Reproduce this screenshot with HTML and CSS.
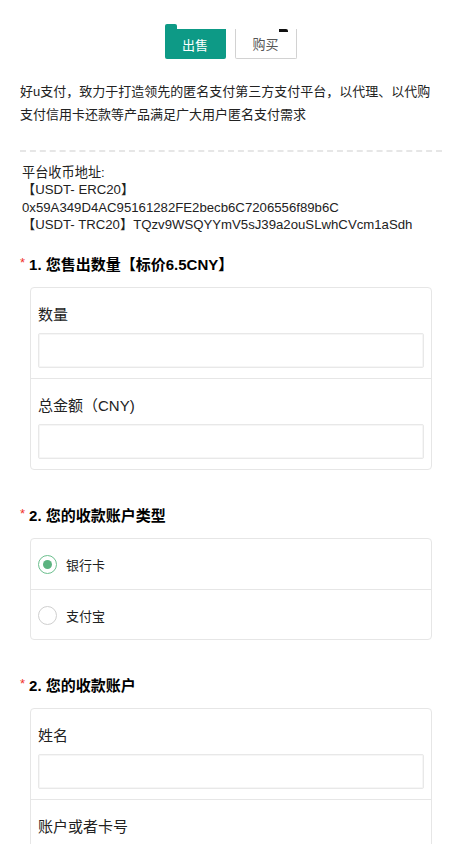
FILE: index.html
```html
<!DOCTYPE html>
<html lang="zh-CN">
<head>
<meta charset="utf-8">
<title>好u支付</title>
<link rel="stylesheet" href="styles.css">
</head>
<body>
<div class="page">
  <div class="tabs">
    <div class="tab tab-sell"><span class="notch"></span>出售</div>
    <div class="tab tab-buy">购买<span class="mark"></span></div>
  </div>

  <p class="intro">好u支付，致力于打造领先的匿名支付第三方支付平台，以代理、以代购支付信用卡还款等产品满足广大用户匿名支付需求</p>

  <div class="divider"></div>

  <div class="address">
    <div>平台收币地址:</div>
    <div>【USDT- ERC20】</div>
    <div>0x59A349D4AC95161282FE2becb6C7206556f89b6C</div>
    <div>【USDT- TRC20】TQzv9WSQYYmV5sJ39a2ouSLwhCVcm1aSdh</div>
  </div>

  <section class="question q-first">
    <h2 class="q-title"><span class="req">*</span>1. 您售出数量【标价6.5CNY】</h2>
    <div class="card">
      <div class="field">
        <div class="label">数量</div>
        <div class="input"></div>
      </div>
      <div class="field">
        <div class="label">总金额（CNY)</div>
        <div class="input"></div>
      </div>
    </div>
  </section>

  <section class="question">
    <h2 class="q-title"><span class="req">*</span>2. 您的收款账户类型</h2>
    <div class="card">
      <div class="option">
        <span class="radio checked"></span>
        <span class="opt-label">银行卡</span>
      </div>
      <div class="option">
        <span class="radio"></span>
        <span class="opt-label">支付宝</span>
      </div>
    </div>
  </section>

  <section class="question">
    <h2 class="q-title"><span class="req">*</span>2. 您的收款账户</h2>
    <div class="card">
      <div class="field">
        <div class="label">姓名</div>
        <div class="input"></div>
      </div>
      <div class="field">
        <div class="label">账户或者卡号</div>
        <div class="input"></div>
      </div>
    </div>
  </section>
</div>
</body>
</html>
```

FILE: styles.css
```css
* {
  box-sizing: border-box;
}

html, body {
  margin: 0;
  padding: 0;
  background: #ffffff;
}

body {
  font-family: "Liberation Sans", "Noto Sans CJK SC", sans-serif;
  color: #222;
}

.page {
  padding: 0 20px;
}

.tabs {
  display: flex;
  justify-content: center;
  gap: 9px;
  padding-top: 29px;
  padding-right: 1px;
}

.tab {
  position: relative;
  height: 30px;
  display: flex;
  align-items: center;
  justify-content: center;
  font-size: 13px;
}

.tab-sell {
  width: 61px;
  background: #0d9a86;
  color: #fff;
  border-radius: 0 0 2px 2px;
}

.notch {
  position: absolute;
  left: 0;
  top: -5px;
  width: 12px;
  height: 6px;
  background: #0d9a86;
  border-radius: 2px 2px 0 0;
}

.tab-buy {
  width: 62px;
  background: #fff;
  color: #555;
  border: 1px solid #d2d2d2;
  border-top: none;
  border-radius: 0 0 2px 2px;
}

.mark {
  position: absolute;
  right: 8px;
  top: 0;
  width: 9px;
  height: 3px;
  background: #111;
  border-radius: 0 2px 0 0;
}

.intro {
  margin: 21px 0 0;
  font-size: 13px;
  line-height: 23px;
  color: #222;
}

.divider {
  margin-top: 24px;
  border-top: 2px dashed #e6e6e6;
}

.address {
  margin-top: 12px;
  padding-left: 2px;
  font-size: 13.2px;
  line-height: 17.4px;
  color: #222;
}

.question {
  margin-top: 36px;
}

.question.q-first {
  margin-top: 21px;
}

.q-title {
  margin: 0;
  font-size: 15px;
  line-height: 20px;
  font-weight: bold;
  color: #000;
}

.req {
  color: #f0302a;
  font-size: 13px;
  font-weight: normal;
  margin-right: 4px;
  position: relative;
  top: -3px;
}

.card {
  margin: 11px 10px 0 10px;
  border: 1px solid #e6e6e6;
  border-radius: 4px;
}

.field {
  padding: 17px 7px 10px;
  border-top: 1px solid #e6e6e6;
}

.field:first-child {
  border-top: none;
}

.label {
  font-size: 15px;
  line-height: 20px;
  color: #222;
}

.input {
  margin-top: 8px;
  height: 35px;
  border: 1px solid #e8e8e8;
  border-radius: 2px;
  box-shadow: inset 0 0 0 1px #f6f6f6;
}

.option {
  height: 50px;
  display: flex;
  align-items: center;
  padding: 2px 7px 0;
  border-top: 1px solid #e6e6e6;
}

.option:first-child {
  border-top: none;
}

.radio {
  width: 19px;
  height: 19px;
  border-radius: 50%;
  border: 1.5px solid #cfcfcf;
  display: flex;
  align-items: center;
  justify-content: center;
  flex-shrink: 0;
}

.radio.checked {
  border-color: #6cbf8e;
}

.radio.checked::after {
  content: "";
  width: 9px;
  height: 9px;
  border-radius: 50%;
  background: #5cb380;
}

.opt-label {
  margin-left: 9px;
  font-size: 13px;
  color: #222;
}
```
